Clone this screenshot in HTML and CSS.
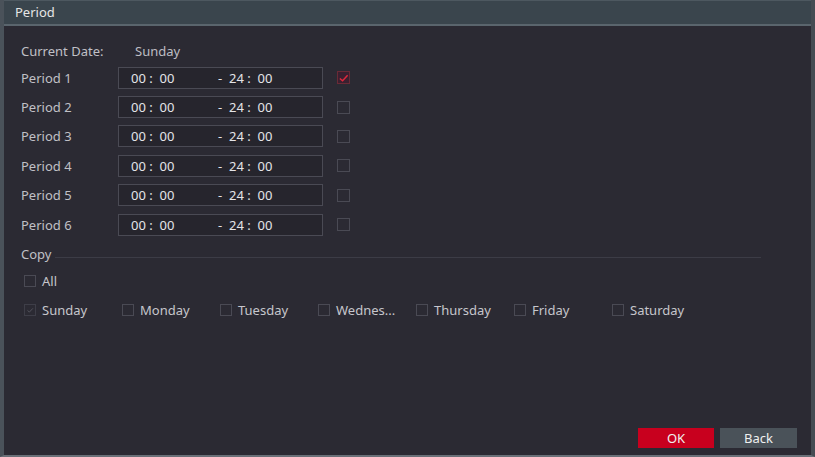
FILE: index.html
```html
<!DOCTYPE html>
<html>
<head>
<meta charset="utf-8">
<link rel="stylesheet" href="styles.css">
</head>
<body>
<div class="window">
  <div class="titlebar">Period</div>
  <div class="content">
    <div class="row date-row"><span class="label">Current Date:</span><span class="date">Sunday</span></div>
    <div class="periods">
      <div class="row"><span class="label">Period 1</span><div class="timebox"><span class="t1">00 :&nbsp; 00</span><span class="t2">- &nbsp;24 :&nbsp; 00</span></div><span class="cb checked-red"><svg viewBox="0 0 12 12" width="12" height="12"><path d="M2 6.5 L5 9 L10.5 3" fill="none" stroke="#e0283c" stroke-width="1.6"/></svg></span></div>
      <div class="row"><span class="label">Period 2</span><div class="timebox"><span class="t1">00 :&nbsp; 00</span><span class="t2">- &nbsp;24 :&nbsp; 00</span></div><span class="cb"></span></div>
      <div class="row"><span class="label">Period 3</span><div class="timebox"><span class="t1">00 :&nbsp; 00</span><span class="t2">- &nbsp;24 :&nbsp; 00</span></div><span class="cb"></span></div>
      <div class="row"><span class="label">Period 4</span><div class="timebox"><span class="t1">00 :&nbsp; 00</span><span class="t2">- &nbsp;24 :&nbsp; 00</span></div><span class="cb"></span></div>
      <div class="row"><span class="label">Period 5</span><div class="timebox"><span class="t1">00 :&nbsp; 00</span><span class="t2">- &nbsp;24 :&nbsp; 00</span></div><span class="cb"></span></div>
      <div class="row"><span class="label">Period 6</span><div class="timebox"><span class="t1">00 :&nbsp; 00</span><span class="t2">- &nbsp;24 :&nbsp; 00</span></div><span class="cb"></span></div>
    </div>
    <div class="copy"><span>Copy</span><div class="line"></div></div>
    <div class="all"><span class="cb small"></span><span class="ctext">All</span></div>
    <div class="days">
      <div class="day"><span class="cb small dim"><svg viewBox="0 0 12 12" width="12" height="12"><path d="M3 6.5 L5.2 8.5 L9.5 4" fill="none" stroke="#5a5a64" stroke-width="1"/></svg></span><span class="ctext">Sunday</span></div>
      <div class="day"><span class="cb small"></span><span class="ctext">Monday</span></div>
      <div class="day"><span class="cb small"></span><span class="ctext">Tuesday</span></div>
      <div class="day"><span class="cb small"></span><span class="ctext">Wednes...</span></div>
      <div class="day"><span class="cb small"></span><span class="ctext">Thursday</span></div>
      <div class="day"><span class="cb small"></span><span class="ctext">Friday</span></div>
      <div class="day"><span class="cb small"></span><span class="ctext">Saturday</span></div>
    </div>
    <div class="spacer"></div>
    <div class="buttons">
      <div class="btn ok">OK</div>
      <div class="btn back">Back</div>
    </div>
  </div>
</div>
</body>
</html>
```
FILE: styles.css
```css
* { box-sizing: border-box; }
html, body { margin: 0; padding: 0; background: #2b2a33; }
body { font-family: "Noto Sans", "Open Sans", sans-serif; font-size: 13px; color: #c6c6cc; }
.window {
  width: 815px; height: 457px;
  display: flex; flex-direction: column;
  border-left: 4px solid #4a525a;
  border-right: 4px solid #454c53;
  border-bottom: 2px solid #6a7078;
  background: #2b2a33;
}
.titlebar {
  height: 26px;
  background: #3a454d;
  border-top: 1px solid #4d5860;
  border-bottom: 2px solid #5a656d;
  color: #e6e6e6;
  padding-left: 11px;
  line-height: 22px;
  font-size: 13px;
  flex: none;
}
.content {
  flex: 1;
  display: flex; flex-direction: column;
  padding: 14px 0 0 17px;
}
.row { display: flex; align-items: center; height: 29.4px; }
.date-row { height: 22px; margin-bottom: 1px; }
.label { width: 97px; color: #c0c0c6; }
.date { margin-left: 17px; color: #bdbdc3; }
.timebox {
  width: 205px; height: 22px;
  border: 1px solid #4a4a54;
  background: #26252d;
  display: flex; align-items: center;
  color: #e4e4e8;
  padding-left: 12px;
  font-size: 13px;
}
.t1 { width: 87px; }
.cb {
  width: 13px; height: 13px;
  border: 1px solid #4a4a54;
  margin-left: 14px;
  display: inline-flex; align-items: center; justify-content: center;
  flex: none;
}
.cb svg { display: block; }
.checked-red { border-color: #6a2a36; background: #3a2030; }
.copy { display: flex; align-items: center; margin-top: 4px; height: 22px; }
.copy span { color: #c0c0c6; }
.copy .line { flex: none; width: 706px; height: 1px; background: #3c3c46; margin-left: 4px; margin-top: 6px; }
.all { display: flex; align-items: center; height: 24px; margin-top: 4px; }
.all .cb, .day .cb { margin-left: 3px; width: 12px; height: 12px; }
.ctext { margin-left: 6px; color: #c6c6cc; }
.days { display: flex; align-items: center; height: 24px; margin-top: 5px; }
.day { width: 98px; display: flex; align-items: center; }
.dim { border-color: #3e3e48; }
.spacer { flex: 1; }
.buttons { display: flex; justify-content: flex-end; gap: 6px; padding-right: 14px; margin-bottom: 7px; }
.btn { width: 76px; height: 20px; line-height: 20px; text-align: center; color: #f0f0f0; font-size: 13px; }
.ok { background: #c8001e; }
.back { background: #4a5259; width: 77px; }
```
